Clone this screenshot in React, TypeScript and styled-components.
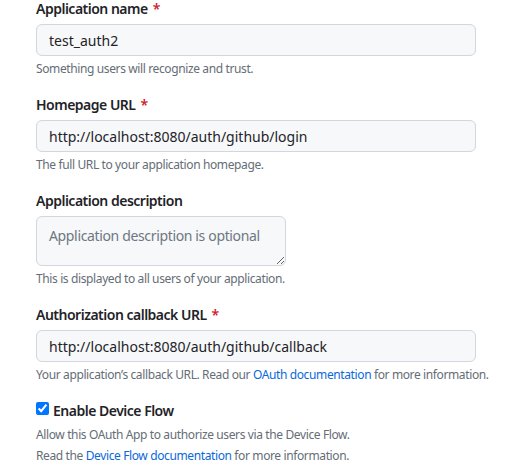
import React from "react";
import styled, { createGlobalStyle } from "styled-components";

const GlobalStyle = createGlobalStyle`
  html, body { margin: 0; padding: 0; background: #ffffff; }
  body { font-family: "Noto Sans", "Segoe UI", sans-serif; color: #1f2328; }
  * { box-sizing: border-box; }
`;

const Form = styled.div`
  padding: 0 0 0 36px;
  width: 507px;
  display: flex;
  flex-direction: column;
`;

const Field = styled.div`
  display: flex;
  flex-direction: column;
  margin-bottom: 18px;
`;

const Label = styled.label`
  font-size: 14px;
  line-height: 18px;
  font-weight: 600;
  letter-spacing: -0.5px;
  color: #1f2328;
  margin-bottom: 6px;
`;

const Required = styled.span`
  color: #cf222e;
  margin-left: 5px;
`;

const TextInput = styled.input`
  width: 440px;
  height: 32px;
  padding: 0 12px;
  font-family: inherit;
  font-size: 14px;
  line-height: 20px;
  color: #1f2328;
  background: #f6f8fa;
  border: 1px solid #d0d7de;
  border-radius: 6px;
  outline: none;
`;

const TextArea = styled.textarea`
  width: 250px;
  height: 50px;
  padding: 9px 12px 0;
  font-family: inherit;
  font-size: 14px;
  line-height: 20px;
  letter-spacing: -0.35px;
  color: #1f2328;
  background: #f6f8fa;
  border: 1px solid #d0d7de;
  border-radius: 6px;
  outline: none;
  resize: both;
  &::placeholder { color: #6e7781; }
`;

const Note = styled.p<{ $gap?: number }>`
  margin: ${(p) => p.$gap ?? 4}px 0 0;
  font-size: 12px;
  line-height: 18px;
  letter-spacing: -0.38px;
  color: #656d76;
  white-space: nowrap;
`;

const Link = styled.a`
  color: #0969da;
  text-decoration: none;
`;

const CheckRow = styled.label`
  display: flex;
  align-items: flex-start;
  gap: 4px;
  font-size: 14px;
  line-height: 18px;
  font-weight: 600;
  letter-spacing: -0.5px;
  color: #1f2328;
`;

const Check = styled.input`
  width: 13px;
  height: 13px;
  margin: 0;
`;

export default function App() {
  return (
    <>
      <GlobalStyle />
      <Form>
        <Field>
          <Label>
            Application name<Required>*</Required>
          </Label>
          <TextInput defaultValue="test_auth2" />
          <Note>Something users will recognize and trust.</Note>
        </Field>
        <Field>
          <Label>
            Homepage URL<Required>*</Required>
          </Label>
          <TextInput defaultValue="http://localhost:8080/auth/github/login" />
          <Note>The full URL to your application homepage.</Note>
        </Field>
        <Field>
          <Label>Application description</Label>
          <TextArea placeholder="Application description is optional" />
          <Note>This is displayed to all users of your application.</Note>
        </Field>
        <Field>
          <Label>
            Authorization callback URL<Required>*</Required>
          </Label>
          <TextInput defaultValue="http://localhost:8080/auth/github/callback" />
          <Note>
            Your application’s callback URL. Read our{" "}
            <Link href="#">OAuth documentation</Link> for more information.
          </Note>
        </Field>
        <Field>
          <CheckRow>
            <Check type="checkbox" defaultChecked />
            Enable Device Flow
          </CheckRow>
          <Note $gap={6}>Allow this OAuth App to authorize users via the Device Flow.</Note>
          <Note $gap={3}>
            Read the <Link href="#">Device Flow documentation</Link> for more information.
          </Note>
        </Field>
      </Form>
    </>
  );
}
